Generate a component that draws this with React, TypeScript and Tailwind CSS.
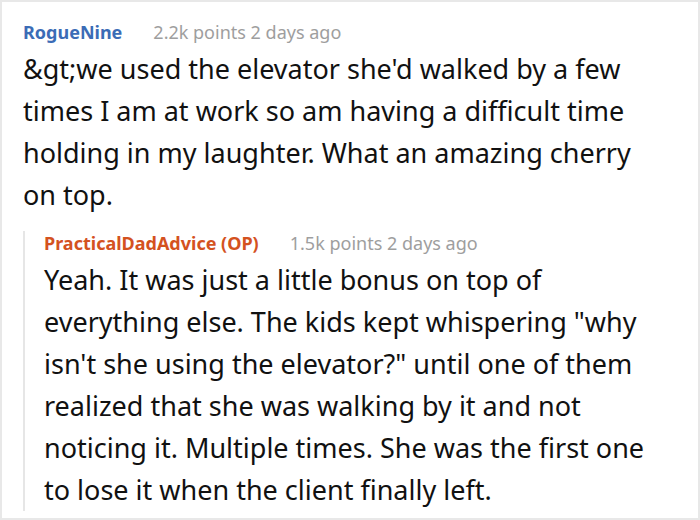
import React from 'react';

function Meta({ name, color, points, age }: { name: string; color: string; points: string; age: string }) {
  return (
    <div className="flex items-baseline gap-[31px] text-[18px] leading-[24px]">
      <span className={`font-bold ${color}`}>{name}</span>
      <span className="text-[#9e9e9e]">
        {points} points {age}
      </span>
    </div>
  );
}

export default function App() {
  return (
    <div
      className="w-[700px] h-[520px] overflow-hidden bg-white border-2 border-[#e8e8e8] text-[#111]"
      style={{ fontFamily: '"Noto Sans", "Open Sans", sans-serif' }}
    >
      <div className="pl-[21px] pr-[34px] pt-[18px]">
        <Meta name="RogueNine" color="text-[#3b6cb6]" points="2.2k" age="2 days ago" />
        <p className="mt-[4px] text-[27px] leading-[42px]">
          &amp;gt;we used the elevator she'd walked by a few times I am at work so am having a difficult time
          holding in my laughter. What an amazing cherry on top.
        </p>
        <div className="mt-[27px] border-l-2 border-[#e6e6e6] pl-[19px]">
          <div className="-mt-[12px]">
            <Meta name="PracticalDadAdvice (OP)" color="text-[#d4521f]" points="1.5k" age="2 days ago" />
          </div>
          <p className="mt-[4px] -mb-[11px] text-[27px] leading-[42px]">
            Yeah. It was just a little bonus on top of everything else. The kids kept whispering "why isn't she
            using the elevator?" until one of them realized that she was walking by it and not noticing it.
            Multiple times. She was the first one to lose it when the client finally left.
          </p>
        </div>
      </div>
    </div>
  );
}
